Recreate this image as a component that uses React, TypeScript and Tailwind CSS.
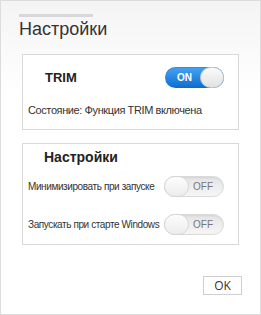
import { useState } from "react";

function Toggle({ on, onClick }: { on: boolean; onClick: () => void }) {
  if (on) {
    return (
      <button
        type="button"
        onClick={onClick}
        className="relative flex h-[21px] w-[59px] shrink-0 items-center rounded-full bg-gradient-to-b from-[#45a4f2] to-[#0a6cd0] shadow-[inset_0_1px_1px_rgba(0,0,0,0.15)]"
      >
        <span className="ml-[12px] text-[10px] font-bold leading-none text-white">ON</span>
        <span className="absolute right-0 top-0 h-[21px] w-[24px] rounded-full border border-[#cfcfcf] bg-gradient-to-b from-[#fbfbfb] to-[#e2e2e2]" />
      </button>
    );
  }
  return (
    <button
      type="button"
      onClick={onClick}
      className="relative flex h-[21px] w-[60px] shrink-0 items-center justify-end rounded-full border border-[#dadada] bg-gradient-to-b from-[#e4e4e4] to-[#f6f6f6] shadow-[inset_0_1px_2px_rgba(0,0,0,0.08)]"
    >
      <span className="mr-[10px] text-[10px] leading-none text-[#777]">OFF</span>
      <span className="absolute -left-px -top-px h-[21px] w-[25px] rounded-full border border-[#d6d6d6] bg-gradient-to-b from-[#fdfdfd] to-[#ececec]" />
    </button>
  );
}

export default function App() {
  const [trim, setTrim] = useState(true);
  const [minimize, setMinimize] = useState(false);
  const [autostart, setAutostart] = useState(false);

  return (
    <div
      className="flex h-[315px] w-[261px] flex-col border border-[#dcdcdc] bg-gradient-to-b from-[#f4f4f4] to-white to-[30%] px-[18px] pt-[13px] text-[#333]"
      style={{ fontFamily: '"Liberation Sans", Arial, sans-serif' }}
    >
      <div className="h-[3px] w-[74px] bg-[#d8d8dc]" />
      <h1 className="mt-[1px] text-[18px] font-normal leading-[22px] text-[#333]">Настройки</h1>

      <div className="mx-[3px] mt-[14px] flex h-[76px] flex-col border border-[#d9d9d9] bg-white pt-[12px]">
        <div className="flex items-center justify-between pl-[22px] pr-[14px]">
          <span className="text-[13px] font-bold leading-none text-[#222]">TRIM</span>
          <Toggle on={trim} onClick={() => setTrim(!trim)} />
        </div>
        <p className="mt-[15px] whitespace-nowrap pl-[5px] text-[11px] leading-[14px] tracking-[-0.4px] text-[#333]">
          Состояние: Функция TRIM {trim ? "включена" : "выключена"}
        </p>
      </div>

      <div className="mx-[3px] mt-[13px] flex h-[102px] flex-col border border-[#d9d9d9] bg-white pt-[4px]">
        <h2 className="pl-[21px] text-[14px] font-bold leading-[18px] text-[#222]">Настройки</h2>
        <div className="mt-[10px] flex items-center justify-between pl-[5px] pr-[14px]">
          <span className="whitespace-nowrap text-[10px] leading-none tracking-[-0.4px] text-[#333]">
            Минимизировать при запуске
          </span>
          <Toggle on={minimize} onClick={() => setMinimize(!minimize)} />
        </div>
        <div className="mt-[17px] flex items-center justify-between pl-[5px] pr-[14px]">
          <span className="whitespace-nowrap text-[10px] leading-none tracking-[-0.4px] text-[#333]">
            Запускать при старте Windows
          </span>
          <Toggle on={autostart} onClick={() => setAutostart(!autostart)} />
        </div>
      </div>

      <div className="mt-[31px] flex justify-end">
        <button
          type="button"
          className="h-[19px] w-[39px] border border-[#cfcfcf] bg-white text-[12px] leading-none text-[#333]"
          style={{ fontFamily: '"Open Sans", sans-serif' }}
        >
          OK
        </button>
      </div>
    </div>
  );
}
